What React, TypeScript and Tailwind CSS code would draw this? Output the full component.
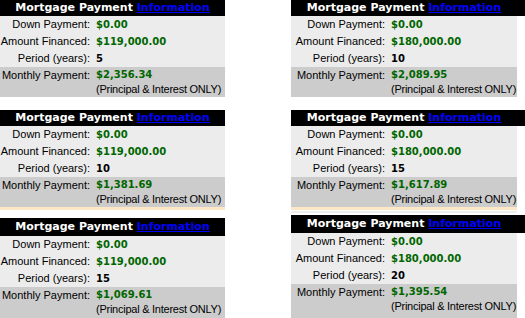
/**
 * Six mortgage payment summaries laid out in two columns.
 */

interface Quote {
  financed: string;
  period: string;
  payment: string;
}

const leftQuotes: Quote[] = [
  { financed: "$119,000.00", period: "5", payment: "$2,356.34" },
  { financed: "$119,000.00", period: "10", payment: "$1,381.69" },
  { financed: "$119,000.00", period: "15", payment: "$1,069.61" },
];

const rightQuotes: Quote[] = [
  { financed: "$180,000.00", period: "10", payment: "$2,089.95" },
  { financed: "$180,000.00", period: "15", payment: "$1,617.89" },
  { financed: "$180,000.00", period: "20", payment: "$1,395.54" },
];

const boldFont = { fontFamily: '"DejaVu Sans", Verdana, sans-serif' };

function Row({ label, children, wide }: { label: string; children: React.ReactNode; wide: boolean }) {
  return (
    <div className="flex h-[17px] items-center">
      <span className={`${wide ? "w-[94px]" : "w-[90px]"} shrink-0 text-right`}>{label}</span>
      <span className="pl-[6px] text-[10px] font-bold" style={boldFont}>
        {children}
      </span>
    </div>
  );
}

function PaymentTable({ quote, wide, tall }: { quote: Quote; wide: boolean; tall?: boolean }) {
  const width = wide ? "w-[226px]" : "w-[225px]";
  return (
    <div className="flex flex-1 flex-col text-[11px] text-black">
      <div className={`${tall ? "h-[18px]" : "h-[16px]"} bg-black`}>
        <div
          className={`${width} ${tall ? "leading-[18px]" : "leading-[16px]"} text-center text-[11px] font-bold text-white`}
          style={boldFont}
        >
          Mortgage Payment{" "}
          <a href="#" className="text-[#0000ff] underline">
            Information
          </a>
        </div>
      </div>
      <div className={`${width} bg-[#ececec]`}>
        <Row label="Down Payment:" wide={wide}>
          <span className="text-[#006600]">$0.00</span>
        </Row>
        <Row label="Amount Financed:" wide={wide}>
          <span className="text-[#006600]">{quote.financed}</span>
        </Row>
        <Row label="Period (years):" wide={wide}>
          {quote.period}
        </Row>
      </div>
      <div className={`${width} flex min-h-[30px] flex-1 bg-[#cccccc] pt-[1px] leading-[14px]`}>
        <span className={`${wide ? "w-[94px]" : "w-[90px]"} shrink-0 text-right`}>Monthly Payment:</span>
        <div className="pl-[6px]">
          <div className="text-[10px] font-bold text-[#006600]" style={boldFont}>
            {quote.payment}
          </div>
          <div className="whitespace-nowrap tracking-[-0.25px]">(Principal &amp; Interest ONLY)</div>
        </div>
      </div>
    </div>
  );
}

function Column({ quotes, wide }: { quotes: Quote[]; wide: boolean }) {
  const width = wide ? "w-[226px]" : "w-[225px]";
  return (
    <div className="flex h-[318px] flex-col">
      <div className="flex flex-col">
        <PaymentTable quote={quotes[0]} wide={wide} />
      </div>
      <div className="mt-[13px] flex flex-col">
        <PaymentTable quote={quotes[1]} wide={wide} />
      </div>
      <div className={`${width} h-[3px] bg-[#fde8c6]`} />
      {wide ? (
        <div className={`${width} mt-[1px] mb-[2px] h-[2px] bg-[#eeeeee]`} />
      ) : (
        <div className="h-[8px]" />
      )}
      <div className="flex flex-1 flex-col">
        <PaymentTable quote={quotes[2]} wide={wide} tall />
      </div>
    </div>
  );
}

export default function App() {
  return (
    <div
      className="flex h-[318px] w-[525px] gap-[66px] overflow-hidden bg-white"
      style={{ fontFamily: '"Liberation Sans", Arial, sans-serif' }}
    >
      <div className="w-[225px]">
        <Column quotes={leftQuotes} wide={false} />
      </div>
      <div className="flex-1">
        <Column quotes={rightQuotes} wide={true} />
      </div>
    </div>
  );
}
